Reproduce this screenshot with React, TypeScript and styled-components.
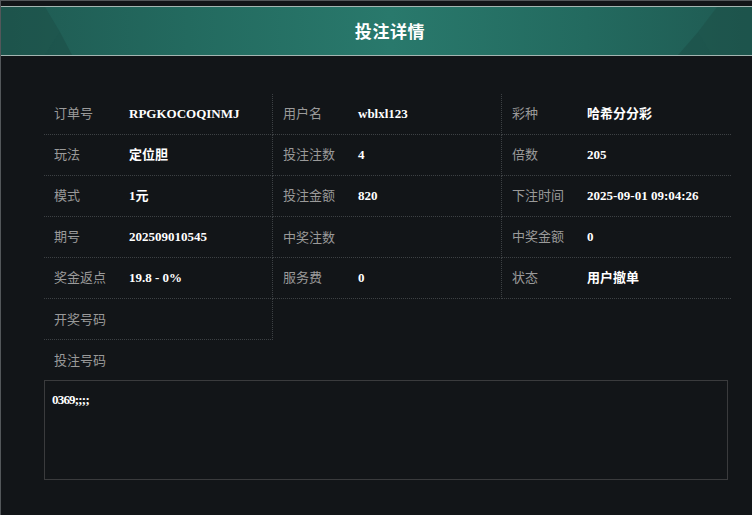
import React from "react";
import styled, { createGlobalStyle } from "styled-components";

const Global = createGlobalStyle`
  html, body { margin: 0; padding: 0; background: #121518; }
  body { font-family: "Noto Sans CJK SC", "Noto Sans", sans-serif; }
  * { box-sizing: border-box; }
`;

const Frame = styled.div`
  width: 752px;
  height: 515px;
  background: #121518;
  border-top: 1px solid #53575a;
  border-left: 1px solid #53575a;
  padding-top: 5px;
  overflow: hidden;
`;

const Header = styled.div`
  position: relative;
  height: 50px;
  margin-left: -1px;
  padding-left: 28px;
  border-top: 1px solid #a3b5b1;
  border-bottom: 1px solid #a3b5b1;
  background: linear-gradient(90deg, #1f5a52 0%, #236a5f 25%, #29796c 52%, #236a5f 78%, #1f5a52 100%);
  display: flex;
  align-items: center;
  justify-content: center;
  overflow: hidden;
`;

const Deco = styled.svg<{ $side: "left" | "right" }>`
  position: absolute;
  top: 0;
  ${(p) => (p.$side === "left" ? "left: 0;" : "right: 0;")}
  width: 80px;
  height: 48px;
`;

const Title = styled.h1`
  position: relative;
  margin: 0 0 2px;
  font-size: 17px;
  font-weight: 700;
  color: #ffffff;
  font-family: "Noto Sans CJK SC", sans-serif;
  letter-spacing: 0.6px;
`;

const Body = styled.div`
  padding: 38px 0 0 43px;
`;

const Grid = styled.div`
  display: grid;
  grid-template-columns: 229px 229px 229px;
  width: 687px;
`;

const Cell = styled.div<{ $last?: boolean }>`
  height: 41px;
  display: flex;
  align-items: center;
  padding-left: 10px;
  border-bottom: 1px dotted #3d4144;
  border-right: ${(p) => (p.$last ? "none" : "1px dotted #3d4144")};
`;

const Pair = styled.div`
  display: flex;
  align-items: baseline;
  line-height: 18px;
  margin-top: -1px;
`;

const Label = styled.span`
  width: 75px;
  flex: none;
  font-size: 13px;
  color: #9a9a9a;
  font-family: "Noto Sans CJK SC", sans-serif;
`;

const Value = styled.span`
  font-size: 13px;
  font-weight: 700;
  color: #ffffff;
  font-family: "Liberation Serif", "Noto Sans CJK SC", serif;
`;

const PlainRow = styled.div`
  height: 40px;
  display: flex;
  align-items: center;
  padding-left: 10px;
`;

const CodeBox = styled.div`
  width: 684px;
  height: 100px;
  border: 1px solid #3a3b3d;
  padding: 11px 7px;
  font-family: "Liberation Serif", serif;
  font-weight: 700;
  font-size: 13px;
  color: #ffffff;
  letter-spacing: -0.8px;
`;

type Item = { label: string; value: string };

const rows: Item[][] = [
  [
    { label: "订单号", value: "RPGKOCOQINMJ" },
    { label: "用户名", value: "wblxl123" },
    { label: "彩种", value: "哈希分分彩" },
  ],
  [
    { label: "玩法", value: "定位胆" },
    { label: "投注注数", value: "4" },
    { label: "倍数", value: "205" },
  ],
  [
    { label: "模式", value: "1元" },
    { label: "投注金额", value: "820" },
    { label: "下注时间", value: "2025-09-01 09:04:26" },
  ],
  [
    { label: "期号", value: "202509010545" },
    { label: "中奖注数", value: "" },
    { label: "中奖金额", value: "0" },
  ],
  [
    { label: "奖金返点", value: "19.8 - 0%" },
    { label: "服务费", value: "0" },
    { label: "状态", value: "用户撤单" },
  ],
];

export default function App() {
  return (
    <Frame>
      <Global />
      <Header>
        <Deco $side="left" viewBox="0 0 80 48">
          <polygon points="0,0 45,0 60,25 45,48 0,48" fill="#1b4d46" opacity="0.5" />
          <polygon points="60,25 72,48 45,48" fill="#1a4a43" opacity="0.45" />
        </Deco>
        <Deco $side="right" viewBox="0 0 80 48">
          <polygon points="80,0 45,0 26,25 40,48 80,48" fill="#1b4d46" opacity="0.5" />
          <polygon points="26,25 6,48 40,48" fill="#1a4a43" opacity="0.45" />
        </Deco>
        <Title>投注详情</Title>
      </Header>
      <Body>
        <Grid>
          {rows.map((r, i) =>
            r.map((it, j) => (
              <Cell key={`${i}-${j}`} $last={j === 2}>
                <Pair>
                  <Label>{it.label}</Label>
                  <Value>{it.value}</Value>
                </Pair>
              </Cell>
            ))
          )}
          <Cell>
            <Pair>
              <Label>开奖号码</Label>
            </Pair>
          </Cell>
        </Grid>
        <PlainRow>
          <Pair>
            <Label>投注号码</Label>
          </Pair>
        </PlainRow>
        <CodeBox>0369;;;;</CodeBox>
      </Body>
    </Frame>
  );
}
